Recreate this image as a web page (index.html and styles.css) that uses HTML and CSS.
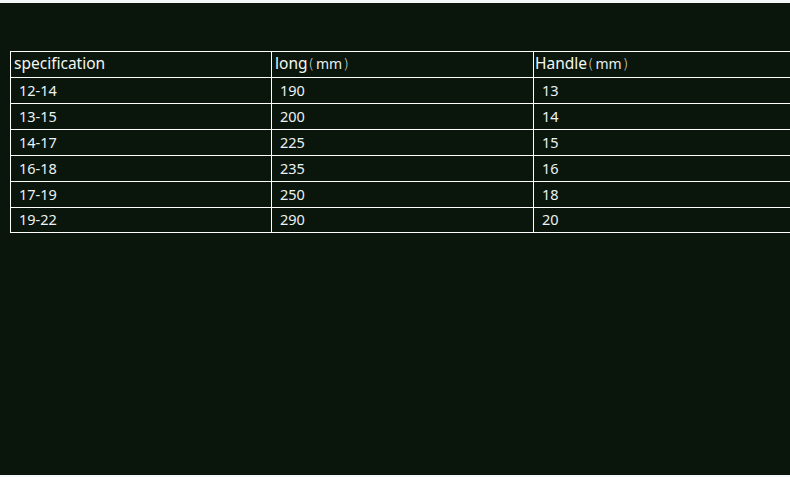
FILE: index.html
```html
<!DOCTYPE html>
<html>
<head>
<meta charset="utf-8">
<link rel="stylesheet" href="styles.css">
</head>
<body>
<div class="page">
  <table class="spec">
    <colgroup>
      <col class="c1"><col class="c2"><col class="c3">
    </colgroup>
    <tr class="head">
      <td>specification</td>
      <td>long<span class="unit"><span class="p">(</span>mm<span class="p">)</span></span></td>
      <td class="tight">Handle<span class="unit"><span class="p">(</span>mm<span class="p">)</span></span></td>
    </tr>
    <tr><td class="d">12-14</td><td class="d">190</td><td class="d">13</td></tr>
    <tr><td class="d">13-15</td><td class="d">200</td><td class="d">14</td></tr>
    <tr><td class="d">14-17</td><td class="d">225</td><td class="d">15</td></tr>
    <tr><td class="d">16-18</td><td class="d">235</td><td class="d">16</td></tr>
    <tr><td class="d">17-19</td><td class="d">250</td><td class="d">18</td></tr>
    <tr class="last"><td class="d">19-22</td><td class="d">290</td><td class="d">20</td></tr>
  </table>
</div>
</body>
</html>
```
FILE: styles.css
```css
html, body {
  margin: 0;
  padding: 0;
  background: #f4f8fb;
  overflow: hidden;
}
.page {
  margin-top: 3px;
  height: 472px;
  background: #0a160b;
  padding: 48px 0 0 10px;
  box-sizing: border-box;
  overflow: hidden;
  font-family: "Noto Sans", "Open Sans", "Noto Sans CJK SC", sans-serif;
  color: #f2f6f2;
}
.spec {
  border-collapse: collapse;
  width: 820px;
  table-layout: fixed;
}
.c1 { width: 261px; }
.c2 { width: 262px; }
.spec td {
  border: 1px solid #ffffff;
  padding: 0;
  height: 26px;
  box-sizing: border-box;
  vertical-align: middle;
  white-space: nowrap;
  line-height: 18px;
}
.head td {
  font-size: 15.5px;
  padding-left: 3px;
  padding-bottom: 3px;
}
.head td.tight { padding-left: 1px; }
.unit {
  font-size: 14px;
  color: #e8eef0;
}
.unit .p {
  font-weight: 300;
  font-family: "DejaVu Sans", sans-serif;
  font-size: 14px;
  margin: 0 2px 0 1px;
}
.d {
  font-size: 14.5px;
  color: #eaf2f4;
  padding-left: 8px !important;
  padding-bottom: 2px !important;
}
.last td { height: 25px; }
```
